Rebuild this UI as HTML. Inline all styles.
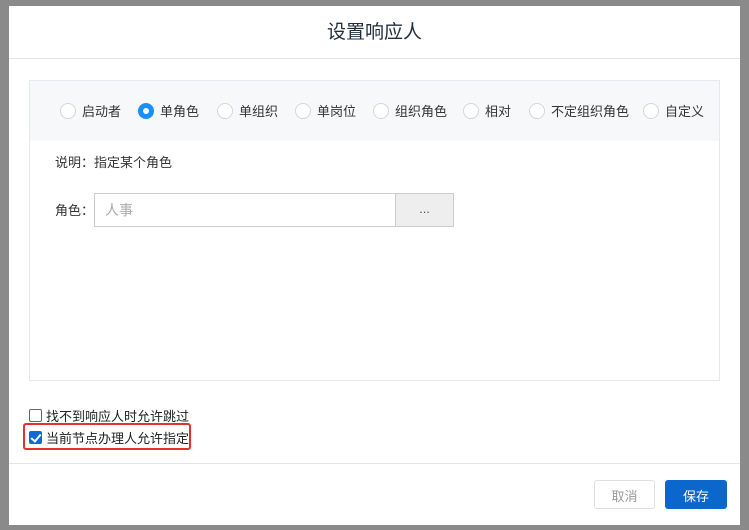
<!DOCTYPE html>
<html><head><meta charset="utf-8"><style>
*{box-sizing:border-box;margin:0;padding:0}
body{width:749px;height:530px;background:#8a8a8a;font-family:"Liberation Sans","Noto Sans CJK SC",sans-serif;font-size:13px;color:#333;position:relative;overflow:hidden}
.dlg{position:absolute;left:9px;top:6px;width:731px;height:519px;background:#fff}
.hd{height:53px;border-bottom:1px solid #e4e6eb;text-align:center;line-height:53px;font-size:19px;color:#1f2d3d}
.box{position:absolute;left:20px;top:74px;width:691px;height:301px;border:1px solid #e6e8ec;background:#fff}
.tabs{height:60px;background:#f7f8fa;position:relative}
.r{position:absolute;top:20px;display:flex;align-items:center;font-size:13px;color:#333}
.r i{width:16px;height:16px;border:1px solid #d4d6db;border-radius:50%;background:#fff;margin-right:6px;display:inline-block}
.r i.on{border:5px solid #1890ff}
.desc{position:absolute;left:25px;top:71px}
.lbl{position:absolute;left:25px;top:119px}
.inp{position:absolute;left:64px;top:112px;width:302px;height:34px;border:1px solid #ccc;border-right:none;padding-left:10px;line-height:32px;color:#aaa;font-size:14px}
.btn3{position:absolute;left:365px;top:112px;width:59px;height:34px;border:1px solid #ccc;background:#eee;text-align:center;line-height:30px;color:#555}
.cb{position:absolute;left:20px;display:flex;align-items:center;font-size:13px;color:#222}
.cb i{width:13px;height:13px;border:1px solid #666;border-radius:2px;margin-right:4px;display:inline-block;background:#fff}
.cb i.on{background:#0b6bd6;border-color:#0b6bd6;position:relative}
.cb i.on:after{content:"";position:absolute;left:3px;top:0px;width:4px;height:8px;border:solid #fff;border-width:0 2px 2px 0;transform:rotate(40deg)}
.red{position:absolute;left:14px;top:417px;width:168px;height:27px;border:2px solid #e53030;border-radius:3px}
.ft{position:absolute;left:0;top:457px;width:731px;border-top:1px solid #e4e6eb}
.b{position:absolute;top:474px;height:29px;border-radius:3px;display:flex;align-items:center;justify-content:center;font-size:13px;padding-top:1px}
</style></head><body>
<div class="dlg">
<div class="hd">设置响应人</div>
<div class="box">
<div class="tabs">
<span class="r" style="left:30px"><i></i>启动者</span>
<span class="r" style="left:108px"><i class="on"></i>单角色</span>
<span class="r" style="left:187px"><i></i>单组织</span>
<span class="r" style="left:265px"><i></i>单岗位</span>
<span class="r" style="left:343px"><i></i>组织角色</span>
<span class="r" style="left:433px"><i></i>相对</span>
<span class="r" style="left:499px"><i></i>不定组织角色</span>
<span class="r" style="left:613px"><i></i>自定义</span>
</div>
<div class="desc">说明：指定某个角色</div>
<div class="lbl">角色：</div>
<div class="inp">人事</div>
<div class="btn3">...</div>
</div>
<div class="cb" style="top:400px"><i></i>找不到响应人时允许跳过</div>
<div class="cb" style="top:422px"><i class="on"></i>当前节点办理人允许指定</div>
<div class="red"></div>
<div class="ft"></div>
<div class="b" style="left:585px;width:61px;border:1px solid #dcdfe6;color:#999">取消</div>
<div class="b" style="left:656px;width:62px;background:#0b67cc;color:#fff">保存</div>
</div>
</body></html>
